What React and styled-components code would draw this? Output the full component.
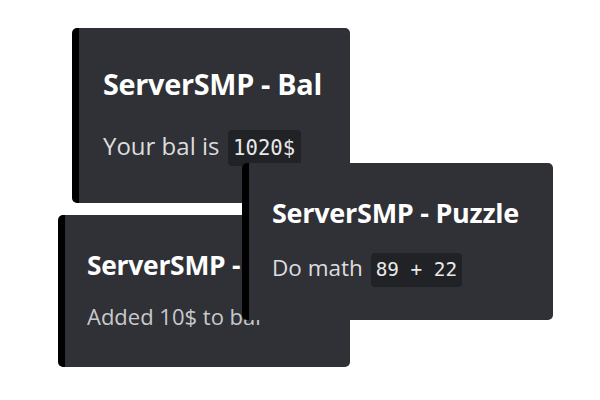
import React from 'react';
import styled, { createGlobalStyle } from 'styled-components';

const GlobalStyle = createGlobalStyle`
  html, body {
    margin: 0;
    padding: 0;
    background: #ffffff;
  }
  body {
    font-family: 'Open Sans', 'Noto Sans', sans-serif;
  }
`;

const Canvas = styled.div`
  position: relative;
  width: 600px;
  height: 400px;
  background: #ffffff;
  overflow: hidden;
`;

// embeds are stacked on a free canvas, so each one is placed by its coordinates
const Embed = styled.div`
  position: absolute;
  left: ${(p) => p.x}px;
  top: ${(p) => p.y}px;
  width: ${(p) => p.w}px;
  height: ${(p) => p.h}px;
  z-index: ${(p) => p.z};
  box-sizing: border-box;
  display: flex;
  flex-direction: column;
  padding: ${(p) => p.pt}px 16px 0 ${(p) => p.pl}px;
  background: #2f3136;
  border-left: 7px solid #000000;
  border-radius: 5px;
  font-size: ${(p) => p.size}px;
  overflow: hidden;
`;

const Title = styled.div`
  font-weight: 700;
  font-size: 1.2em;
  line-height: 1.2;
  color: #ffffff;
  white-space: nowrap;
  letter-spacing: -0.01em;
`;

const Description = styled.div`
  margin-top: ${(p) => p.gap}px;
  font-size: 1em;
  line-height: 1.5;
  color: ${(p) => (p.dim ? '#c8c9cb' : '#dcddde')};
  white-space: nowrap;
`;

const Code = styled.code`
  display: inline-block;
  font-family: 'DejaVu Sans Mono', 'Liberation Mono', monospace;
  font-size: 0.86em;
  line-height: 1;
  padding: 0.38em 0.26em;
  margin-left: 0.1em;
  background: #202225;
  border-radius: 4px;
  color: #e8e8e8;
`;

export default function App() {
  return (
    <Canvas>
      <GlobalStyle />
      <Embed x={72} y={28} w={278} h={175} z={1} pt={39} pl={24} size={24}>
        <Title>ServerSMP - Bal</Title>
        <Description gap={26}>
          Your bal is <Code>1020$</Code>
        </Description>
      </Embed>
      <Embed x={58} y={215} w={292} h={152} z={1} pt={35} pl={22} size={22}>
        <Title>ServerSMP - Bal</Title>
        <Description gap={18} dim>
          Added 10$ to bal
        </Description>
      </Embed>
      <Embed x={242} y={163} w={311} h={157} z={2} pt={34} pl={23} size={22.5}>
        <Title>ServerSMP - Puzzle</Title>
        <Description gap={22}>
          Do math <Code>89 + 22</Code>
        </Description>
      </Embed>
    </Canvas>
  );
}
